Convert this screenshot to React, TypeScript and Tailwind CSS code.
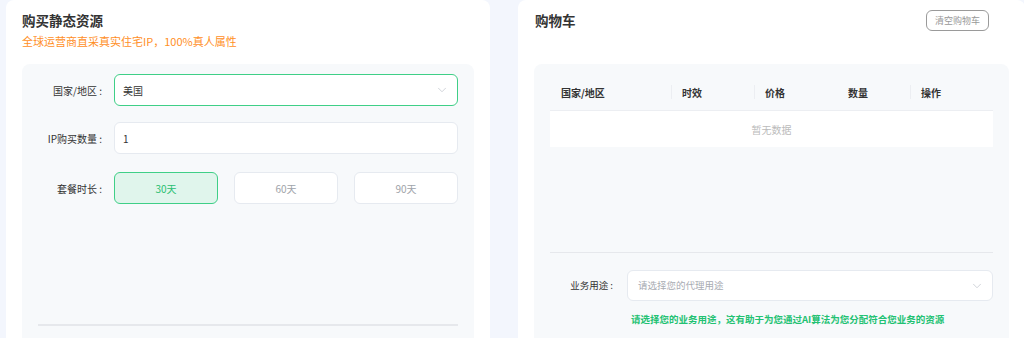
import { ChevronDown } from "lucide-react";

const font = { fontFamily: '"Noto Sans CJK SC", "Noto Sans", sans-serif' };

const durations = [
  { label: "30天", active: true },
  { label: "60天", active: false },
  { label: "90天", active: false },
];

const columns = [
  { title: "国家/地区", width: "w-[121px]", divider: false },
  { title: "时效", width: "w-[83px]", divider: true },
  { title: "价格", width: "w-[83px]", divider: true },
  { title: "数量", width: "w-[73px]", divider: false },
  { title: "操作", width: "flex-1", divider: true },
];

function FormRow({ label, children, className = "" }: { label: string; children: React.ReactNode; className?: string }) {
  return (
    <div className={`flex items-center gap-[12px] ${className}`}>
      <div className="w-[80px] text-right text-[10px] text-[#333]">{label}</div>
      <div className="flex-1">{children}</div>
    </div>
  );
}

function PurchasePanel() {
  return (
    <div className="w-[484px] shrink-0 bg-white rounded-t-lg px-[16px] pt-[10px]">
      <h2 className="text-[13.5px] font-bold text-[#333] leading-[20px]">购买静态资源</h2>
      <p className="text-[11px] text-[#ff8f1f] leading-[16px] mt-[3px]">全球运营商直采真实住宅IP，100%真人属性</p>

      <div className="mt-[15px] bg-[#f7f9fb] rounded-lg pt-[10px] pr-[16px] h-[300px]">
        <FormRow label="国家/地区 :">
          <div className="h-[32px] bg-white border border-[#3fcf87] rounded-md flex items-center justify-between px-[8px]">
            <span className="text-[10px] text-[#333]">美国</span>
            <ChevronDown size={14} strokeWidth={1.25} className="text-[#c0c4cc]" />
          </div>
        </FormRow>

        <FormRow label="IP购买数量 :" className="mt-[16px]">
          <div className="h-[32px] bg-white border border-[#e6eaf0] rounded-md flex items-center px-[8px]">
            <span className="text-[10px] text-[#333]">1</span>
          </div>
        </FormRow>

        <FormRow label="套餐时长 :" className="mt-[18px]">
          <div className="grid grid-cols-3 gap-[16px]">
            {durations.map((d) => (
              <div
                key={d.label}
                className={`h-[32px] rounded-md flex items-center justify-center text-[10px] border ${
                  d.active ? "bg-[#e0f5ec] border-[#3fcf87] text-[#2bbf72]" : "bg-white border-[#e6eaf0] text-[#a0a4aa]"
                }`}
              >
                {d.label}
              </div>
            ))}
          </div>
        </FormRow>

        <div className="ml-[16px] mt-[120px] h-[1.5px] bg-[#e6e8ec]" />
      </div>
    </div>
  );
}

function CartPanel() {
  return (
    <div className="w-[507px] shrink-0 bg-white rounded-t-lg px-[16px] pt-[10px]">
      <div className="flex items-start justify-between pl-[1px] pr-[20px]">
        <h2 className="text-[13.5px] font-bold text-[#333] leading-[20px]">购物车</h2>
        <button className="h-[21px] px-[8px] border border-[#9a9a9a] rounded-md text-[9px] text-[#999] leading-none">
          清空购物车
        </button>
      </div>

      <div className="mt-[33px] bg-[#f7f9fb] rounded-lg pt-[10px] px-[16px] h-[300px]">
        <div className="flex items-center h-[37px] border-b border-[#eceef2]">
          {columns.map((c) => (
            <div key={c.title} className={`${c.width} flex items-center`}>
              {c.divider && <div className="w-px h-[14px] bg-[#eceef2]" />}
              <span className={`text-[10px] font-bold text-[#333] ${c.divider ? "ml-[10px]" : "ml-[11px]"}`}>{c.title}</span>
            </div>
          ))}
        </div>
        <div className="h-[36px] bg-white flex items-center justify-center text-[10px] text-[#bbb]">暂无数据</div>

        <div className="mt-[105px] h-px bg-[#e6e8ec]" />

        <div className="mt-[17px] flex items-center gap-[14px]">
          <div className="w-[63px] text-right text-[9.5px] text-[#333]">业务用途 :</div>
          <div className="flex-1 h-[31px] bg-white border border-[#e6eaf0] rounded-md flex items-center justify-between pl-[10px] pr-[8px]">
            <span className="text-[9.5px] text-[#a8abb2]">请选择您的代理用途</span>
            <ChevronDown size={14} strokeWidth={1.25} className="text-[#c0c4cc]" />
          </div>
        </div>
        <p className="mt-[11px] ml-[81px] text-[9.5px] font-bold text-[#22c172]">
          请选择您的业务用途，这有助于为您通过AI算法为您分配符合您业务的资源
        </p>
      </div>
    </div>
  );
}

export default function App() {
  return (
    <div style={font} className="w-[1024px] h-[338px] overflow-hidden bg-[#f3f6fd] flex gap-[28px] pl-[6px]">
      <PurchasePanel />
      <CartPanel />
    </div>
  );
}
